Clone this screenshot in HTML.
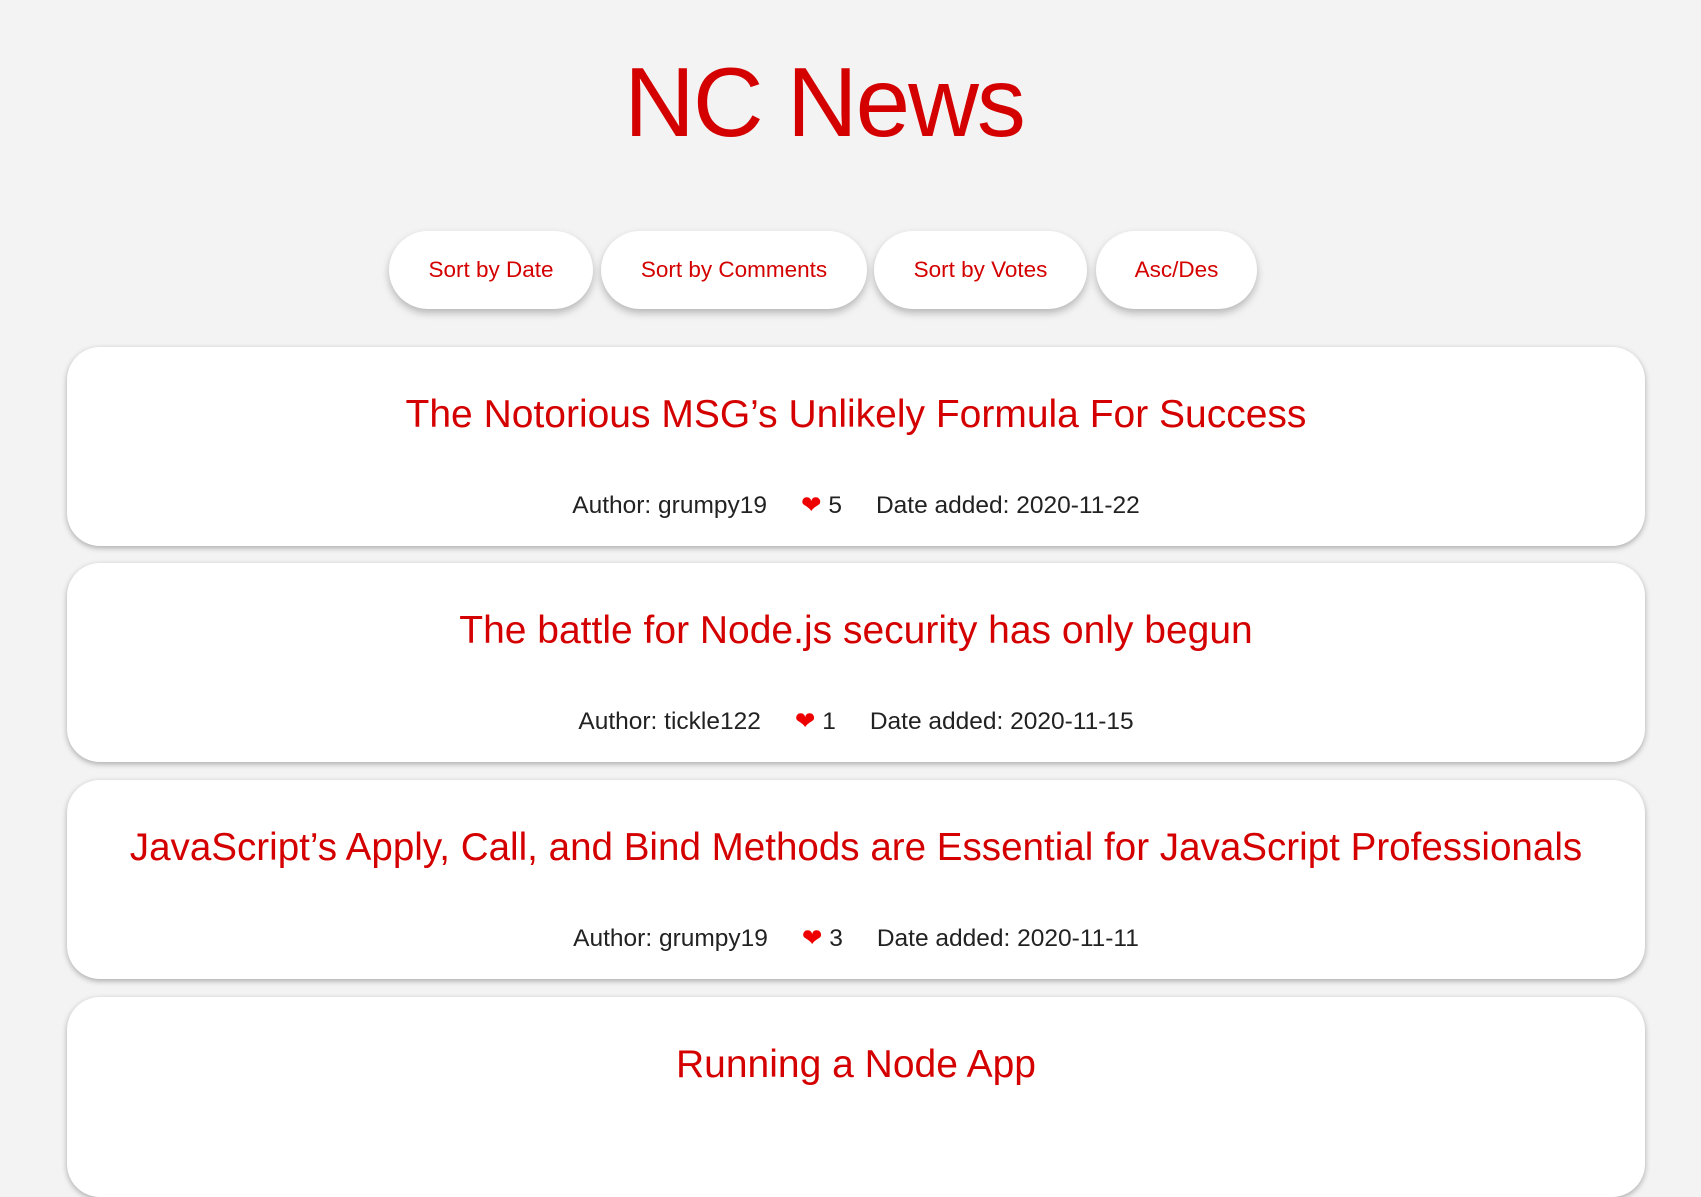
<!DOCTYPE html>
<html><head><meta charset="utf-8"><style>
html,body{margin:0;padding:0;background:#f3f3f3;width:1701px;height:1129px;overflow:hidden;font-family:"Liberation Sans",sans-serif;}
h1{position:absolute;left:0;width:1648px;top:42px;margin:0;text-align:center;color:#d40000;font-weight:normal;font-size:98px;line-height:120px;letter-spacing:-2px;}
.btn{position:absolute;top:231px;height:78px;background:#fff;border-radius:40px;box-shadow:0 4px 8px rgba(0,0,0,.25);color:#d40000;font-size:22.5px;display:flex;align-items:center;justify-content:center;}
.card{position:absolute;left:67px;width:1578px;height:199px;background:#fff;border-radius:33px;box-shadow:0 2px 6px rgba(0,0,0,.3);text-align:center;}
.card .t{position:absolute;left:0;right:0;top:44px;color:#d40000;font-size:39px;line-height:48px;}
.card .m{position:absolute;left:0;right:0;top:144px;color:#222;font-size:24.5px;line-height:30px;}
.m span{margin:0 17px;}
.h{color:#e00;}
</style></head><body>
<h1>NC News</h1>
<div class="btn" style="left:389px;width:204px">Sort by Date</div>
<div class="btn" style="left:601px;width:266px">Sort by Comments</div>
<div class="btn" style="left:874px;width:213px">Sort by Votes</div>
<div class="btn" style="left:1096px;width:161px">Asc/Des</div>

<div class="card" style="top:347px"><div class="t">The Notorious MSG’s Unlikely Formula For Success</div><div class="m"><span>Author: grumpy19</span><span><span class="h" style="margin:0">❤</span> 5</span><span>Date added: 2020-11-22</span></div></div>
<div class="card" style="top:563px"><div class="t">The battle for Node.js security has only begun</div><div class="m"><span>Author: tickle122</span><span><span class="h" style="margin:0">❤</span> 1</span><span>Date added: 2020-11-15</span></div></div>
<div class="card" style="top:780px"><div class="t" style="font-size:38.6px">JavaScript’s Apply, Call, and Bind Methods are Essential for JavaScript Professionals</div><div class="m"><span>Author: grumpy19</span><span><span class="h" style="margin:0">❤</span> 3</span><span>Date added: 2020-11-11</span></div></div>
<div class="card" style="top:997px;height:200px"><div class="t">Running a Node App</div></div>
</body></html>
